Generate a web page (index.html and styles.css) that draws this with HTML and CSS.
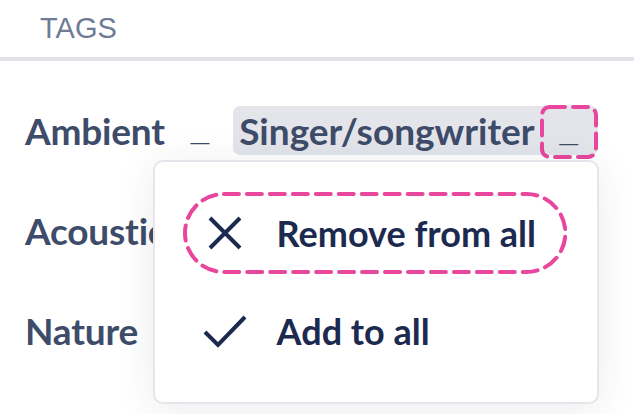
FILE: index.html
```html
<!DOCTYPE html>
<html>
<head>
<meta charset="utf-8">
<link rel="stylesheet" href="styles.css">
</head>
<body>
<div class="panel">
  <div class="head">TAGS</div>
  <div class="rows">
    <div class="row">
      <span class="name">Ambient</span>
      <span class="dash">_</span>
      <span class="chip">
        <span class="chip-text">Singer/songwriter</span>
        <span class="chip-btn">
          <span class="dash">_</span>
          <svg class="ring" viewBox="0 0 58 54" preserveAspectRatio="none"><rect x="2" y="2" width="54" height="50" rx="8" ry="8"/></svg>
        </span>
        <div class="menu">
          <div class="item focus">
            <span class="ico">
              <svg width="36" height="36" viewBox="0 0 36 36"><path d="M3 3 L33 33 M33 3 L3 33"/></svg>
            </span>
            <span class="label">Remove from all</span>
            <svg class="pill-ring" viewBox="0 0 385 82" preserveAspectRatio="none"><rect x="2" y="2" width="381" height="78" rx="39" ry="39"/></svg>
          </div>
          <div class="item">
            <span class="ico">
              <svg width="44" height="34" viewBox="0 0 44 34"><path d="M2 18 L15 31 L42 3"/></svg>
            </span>
            <span class="label">Add to all</span>
          </div>
        </div>
      </span>
    </div>
    <div class="row"><span class="name">Acoustic</span></div>
    <div class="row"><span class="name">Nature</span></div>
  </div>
</div>
</body>
</html>
```

FILE: styles.css
```css
html, body {
  margin: 0;
  padding: 0;
  background: #ffffff;
}
body {
  font-family: "Lato", "Liberation Sans", sans-serif;
  width: 634px;
  height: 414px;
  overflow: hidden;
}
.panel {
  display: flex;
  flex-direction: column;
}
.head {
  font-family: "Liberation Sans", Arial, sans-serif;
  font-size: 29px;
  color: #6e7b92;
  height: 61px;
  padding-left: 40px;
  box-sizing: border-box;
  display: flex;
  align-items: center;
  border-bottom: 4px solid #e2e2e8;
}
.rows {
  display: flex;
  flex-direction: column;
  padding-top: 19px;
  padding-left: 25px;
}
.row {
  height: 100px;
  display: flex;
  align-items: center;
}
.name {
  font-size: 37px;
  font-weight: 700;
  color: #3e4c6a;
  line-height: 1;
  letter-spacing: -0.2px;
}
.dash {
  font-family: "Liberation Sans", Arial, sans-serif;
  font-size: 33px;
  font-weight: 700;
  color: #3e4c6a;
  line-height: 1;
  margin-top: -4px;
}
.row > .dash {
  margin-left: 26px;
  margin-right: 24px;
}
.chip {
  position: relative;
  display: flex;
  align-items: center;
  height: 49px;
  background: #e3e5eb;
  border-radius: 7px;
  padding-left: 6px;
  padding-right: 4px;
}
.chip-text {
  font-size: 37px;
  font-weight: 700;
  color: #3e4c6a;
  line-height: 1;
}
.chip-btn {
  position: relative;
  width: 50px;
  height: 46px;
  margin-left: 9px;
  margin-top: 3px;
  display: flex;
  align-items: center;
  justify-content: center;
}
.ring {
  position: absolute;
  left: -4px;
  top: -4px;
  width: 58px;
  height: 54px;
  fill: none;
  stroke: #e8479d;
  stroke-width: 4;
  stroke-dasharray: 15 8;
  stroke-linecap: round;
}
.menu {
  position: absolute;
  top: 54px;
  right: -1px;
  width: 446px;
  height: 244px;
  box-sizing: border-box;
  background: #ffffff;
  border: 2px solid #e4e6eb;
  border-radius: 10px;
  box-shadow: 0 6px 40px rgba(30, 40, 70, 0.09);
  padding: 30px 28px;
  display: flex;
  flex-direction: column;
  align-items: flex-start;
  gap: 16px;
  z-index: 5;
}
.item {
  position: relative;
  height: 82px;
  box-sizing: border-box;
  display: flex;
  align-items: center;
  padding-left: 20px;
  padding-right: 31px;
  gap: 30px;
}
.ico {
  width: 44px;
  display: flex;
  justify-content: center;
  align-items: center;
}
.ico svg {
  fill: none;
  stroke: #1b2a4e;
  stroke-width: 4;
}
.label {
  font-size: 36px;
  font-weight: 700;
  color: #1b2a4e;
  line-height: 1;
}
.pill-ring {
  position: absolute;
  left: 0;
  top: 0;
  width: 100%;
  height: 100%;
  fill: none;
  stroke: #e8479d;
  stroke-width: 4;
  stroke-dasharray: 15 8;
  stroke-linecap: round;
}
```
